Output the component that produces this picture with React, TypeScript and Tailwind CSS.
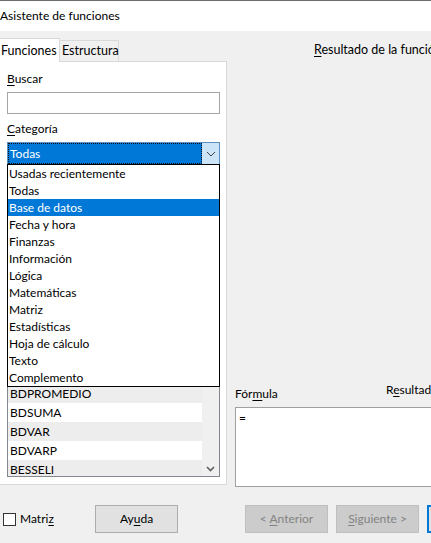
const F = { fontFamily: 'Lato, "Noto Sans", sans-serif' };

const DROPDOWN = ["Usadas recientemente","Todas","Base de datos","Fecha y hora","Finanzas","Información","Lógica","Matemáticas","Matriz","Estadísticas","Hoja de cálculo","Texto","Complemento"];
const LIST = [["BDPROMEDIO", true],["BDSUMA", false],["BDVAR", true],["BDVARP", false],["BESSELI", true]] as const;

function Btn({ children, disabled }: { children: React.ReactNode; disabled?: boolean }) {
  return (
    <div className={`w-[83px] h-[28px] shrink-0 flex items-center justify-center border ${disabled ? "text-[#838383] border-[#bfbfbf] bg-[#cccccc]" : "text-black border-[#adadad] bg-[#e1e1e1]"}`}>
      <span>{children}</span>
    </div>
  );
}

export default function App() {
  return (
    <div style={F} className="relative w-[431px] h-[543px] overflow-hidden bg-[#f0f0f0] text-[12px] leading-[16px] text-black">
      <div className="h-[1px] bg-[#6e6e6e]" />
      <div className="h-[30px] bg-white flex items-center pb-[1px]">Asistente de funciones</div>
      <div className="flex h-[512px]">
        <div className="w-[228px] shrink-0 flex flex-col pt-[7px]">
          <div className="flex items-end h-[23px] relative z-10">
            <div className="h-[24px] w-[60px] bg-white border-t border-r border-[#d9d9d9] flex items-center pl-[1px] -mb-[1px] text-[12.5px]">Funciones</div>
            <div className="h-[21px] w-[59px] bg-[#f0f0f0] border border-b-0 border-l-0 border-[#d9d9d9] flex items-center pl-[2px] text-[12.5px]">Estructura</div>
          </div>
          <div className="relative h-[424px] w-[227px] bg-white border border-l-0 border-[#d9d9d9] pl-[7px] pr-[6px] flex flex-col">
            <div className="mt-[9px] h-[16px]"><u className="underline-offset-2">B</u>uscar</div>
            <div className="mt-[5px] h-[22px] border border-[#a5a5a5] bg-white" />
            <div className="mt-[7px] h-[16px]"><u className="underline-offset-2">C</u>ategoría</div>
            <div className="mt-[5px] h-[23px] flex border border-[#5a8fc4] bg-[#0078d7] text-white">
              <div className="flex-1 flex items-center pl-[1px] border border-dotted border-[#111]">Todas</div>
              <div className="w-[17px] bg-[#cce4f7] flex items-center justify-center">
                <svg width="10" height="6" viewBox="0 0 10 6" fill="none" stroke="#444" strokeWidth="1"><path d="M1 1l4 4 4-4" /></svg>
              </div>
            </div>
            <div className="flex-1" />
            <div className="h-[93px] overflow-hidden border border-[#828790] border-t-0 flex bg-[#f0f0f0] mb-[7px]">
              <div className="flex-1 flex flex-col">
                {LIST.map(([name, shaded]) => (
                  <div key={name} className={`h-[19px] shrink-0 pl-[2px] flex items-center ${shaded ? "bg-[#ededed]" : "bg-white"}`}>{name}</div>
                ))}
              </div>
              <div className="w-[17px] bg-[#f0f0f0] flex items-end justify-center pb-[4px]">
                <svg width="9" height="6" viewBox="0 0 9 6" fill="none" stroke="#606060" strokeWidth="1.6"><path d="M1 1l3.5 3.5L8 1" /></svg>
              </div>
            </div>
            <div className="absolute left-[7px] top-[102px] w-[213px] h-[223px] border border-black bg-white flex flex-col z-20">
              {DROPDOWN.map((d) => (
                <div key={d} className={`h-[17px] leading-[18px] pl-[1px] shrink-0 ${d === "Base de datos" ? "bg-[#0078d7] text-white" : ""}`}>{d}</div>
              ))}
            </div>
          </div>
          <div className="flex items-center mt-[20px]">
            <div className="ml-[3px] w-[13px] h-[13px] border border-[#333] bg-white" />
            <span className="ml-[4px] w-[75px]">Matri<u className="underline-offset-2">z</u></span>
            <Btn>Ay<u className="underline-offset-2">u</u>da</Btn>
          </div>
        </div>
        <div className="flex-1 min-w-0 flex flex-col pl-[7px]">
          <div className="h-[36px] whitespace-nowrap relative">
            <span className="absolute left-[79px] top-[11px] text-[12.5px]"><u className="underline-offset-2">R</u>esultado de la función</span>
          </div>
          <div className="h-[317px]" />
          <div className="h-[20px] flex items-center whitespace-nowrap relative">
            <span>Fór<u className="underline-offset-2">m</u>ula</span>
            <span className="absolute left-[151px] top-[-2px]">R<u className="underline-offset-2">e</u>sultado</span>
          </div>
          <div className="mt-[3px] w-[300px] h-[80px] border border-[#a0a0a0] bg-white pl-[3px] pt-[2px]">=</div>
          <div className="flex mt-[18px] ml-[10px] gap-[8px] w-[300px]">
            <Btn disabled>&lt; <u className="underline-offset-2">A</u>nterior</Btn>
            <Btn disabled><u className="underline-offset-2">S</u>iguiente &gt;</Btn>
            <div className="w-[83px] h-[28px] border-2 border-[#0078d7] bg-[#e1e1e1] shrink-0" />
          </div>
        </div>
      </div>
    </div>
  );
}
